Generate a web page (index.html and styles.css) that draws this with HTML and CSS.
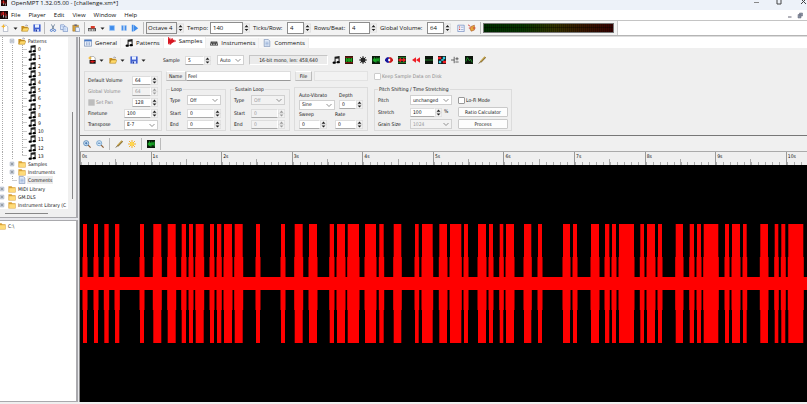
FILE: index.html
```
<!DOCTYPE html>
<html lang="en">
<head>
<meta charset="utf-8">
<title>OpenMPT</title>
<link rel="stylesheet" href="styles.css">
</head>
<body>
<svg class="defs" aria-hidden="true">
  <symbol id="logo" viewBox="0 0 10 10"><path fill="#16080a" d="M0 0h10v10H0z"/><path fill="#d22" d="M1 2h1v4H1zM3 1h2v4H3zM6 2h1v5H6zM8 4h1v2H8z"/><path fill="#ddd" d="M4 5h1v3H4zM7 6h1v3H7z"/></symbol>
  <symbol id="new" viewBox="0 0 10 10"><path fill="#fff" stroke="#8a93a8" stroke-width=".7" d="M3 1.5h3.500l2 2V9.500H3z"/><path fill="#f5b52c" d="M3 0l.9 2.100L6 3l-2.100.9L3 6l-.9-2.100L0 3l2.100-.9z"/></symbol>
  <symbol id="newsmp" viewBox="0 0 10 10"><path fill="#fff" stroke="#777" stroke-width=".7" d="M3 .5h4l2 2V9.500H3z"/><path fill="#f5b52c" d="M2.500 0l.7 1.700L5 2.500l-1.800.8L2.500 5l-.7-1.700L0 2.500l1.800-.8z"/><path fill="#111" d="M2 5h7.500v4.500H2z"/><path fill="#e01818" d="M3 6h2v2H3zM5 5.500h2v3H5zM7 6.500h2v1H7z"/></symbol>
  <symbol id="open" viewBox="0 0 10 10"><path fill="#c98f1f" d="M.5 2.500h3l1 1h4V9h-8z"/><path fill="#ffd968" stroke="#9a7420" stroke-width=".5" d="M2.800 5H10L8.300 9H1z"/><path fill="none" stroke="#557" stroke-width=".7" d="M5.500 1.800q2-1.500 3 .7"/></symbol>
  <symbol id="save" viewBox="0 0 10 10"><path fill="#3f5fd0" d="M.5.5h9v9h-9z"/><path fill="#e8f0ff" d="M2.500.5h5v4h-5z"/><path fill="#cfdcff" d="M3 6.500h4.500v3H3z"/><path fill="#25388c" d="M3.500 7h1.500v2.500H3.500z"/></symbol>
  <symbol id="cut" viewBox="0 0 10 10"><path fill="none" stroke="#5b7391" d="M3 .5l3 6M7 .5l-3 6"/><g fill="none" stroke="#3569c8"><circle cx="3" cy="8" r="1.300"/><circle cx="7" cy="8" r="1.300"/></g></symbol>
  <symbol id="copy" viewBox="0 0 10 10"><g fill="#e6f0ff" stroke="#6484bd" stroke-width=".8"><path d="M.8 1h4l1 1v5h-5z"/><path d="M4 3.500h4l1.500 1.500v4.500H4z"/></g><path stroke="#7fa4df" stroke-width=".6" d="M5 6h3M5 7.500h3M1.800 3H4"/></symbol>
  <symbol id="paste" viewBox="0 0 10 10"><path fill="#d9a33c" stroke="#8c6820" stroke-width=".6" d="M1 1.500h7V9H1z"/><path fill="#667" d="M3 .5h3V2.500H3z"/><path fill="#eaf2ff" stroke="#4d6fae" stroke-width=".6" d="M4.500 4H8l1.500 1.500v4h-5z"/></symbol>
  <symbol id="midi" viewBox="0 0 10 10"><path fill="#555" d="M0 5h10v4H0z"/><path fill="#eee" d="M1 6.500h1.300v2H1zM3 6.500h1.300v2H3zM5 6.500h1.300v2H5zM7 6.500h1.300v2H7z"/><path fill="#d83a28" d="M3.500 2.500h5v3h-5z"/></symbol>
  <symbol id="stop" viewBox="0 0 10 10"><path fill="#3e8ceb" stroke="#9cc5f7" d="M2 2h6v6H2z"/></symbol>
  <symbol id="pause" viewBox="0 0 10 10"><path fill="#3e8ceb" stroke="#9cc5f7" stroke-width=".5" d="M2 2h2.300v6H2zM5.700 2H8v6H5.700z"/></symbol>
  <symbol id="play" viewBox="0 0 10 10"><path fill="#3e8ceb" d="M1 1h2v8.500H1zM3.500 1l5.500 4.200-5.500 4.300z"/></symbol>
  <symbol id="folder" viewBox="0 0 10 10"><path fill="#d9a136" d="M.5 1.500h4l1 1.200h4V9.500h-9z"/><path fill="#ffdc7a" d="M1.500 4H9v4.700H1.500z"/></symbol>
  <symbol id="note" viewBox="0 0 10 10"><path fill="#1c1c1c" d="M3.200.8L9.500 0v8H8.200V3L4.500 3.500V9H3.200z"/><ellipse cx="2.700" cy="8.300" rx="2" ry="1.500"/><ellipse cx="7.700" cy="7.700" rx="2" ry="1.500"/></symbol>
  <symbol id="doc" viewBox="0 0 10 10"><path fill="#dfeaf9" stroke="#7189b0" stroke-width=".8" d="M1.500.5H6.500l2 2v7h-7z"/><path stroke="#7895c5" stroke-width=".7" d="M3 4h4M3 5.700h4M3 7.400h4"/></symbol>
  <symbol id="plus" viewBox="0 0 10 10"><path fill="#fff" stroke="#8795b0" d="M2 2h6v6H2z"/><path stroke="#345" d="M3 5h4M5 3v4"/></symbol>
  <symbol id="minus" viewBox="0 0 10 10"><path fill="#fff" stroke="#8795b0" d="M2 2h6v6H2z"/><path stroke="#345" d="M3 5h4"/></symbol>
  <symbol id="general" viewBox="0 0 10 10"><path fill="#f4f8ff" stroke="#6079a5" stroke-width=".8" d="M.5 1h9v8h-9z"/><path fill="#4779c7" d="M.5 1h9v2h-9z"/><path stroke="#6b88b8" stroke-width=".8" d="M3 4v4M5 4v4M7 4v4"/></symbol>
  <symbol id="wave" viewBox="0 0 10 10"><path fill="#d81722" d="M0 0h1v9H0zM1 2h1v6H1zM2 1h1v9H2zM3 3h1v6H3zM4 2h1v6H4zM5 1.500h1v6H5zM6 3.500h2v3H6zM8 4.500h2v1H8z"/></symbol>
  <symbol id="keys" viewBox="0 0 10 10"><path fill="#333" d="M1 3h8l1 5H0z"/><path fill="#ddd" d="M1.500 5.500h1v2h-1zM3.500 5.500h1v2h-1zM5.500 5.500h1v2h-1zM7.500 5.500h1v2h-1zM2 3.500h6v.7H2z"/></symbol>
  <symbol id="grid" viewBox="0 0 10 10"><path fill="#0b160b" d="M0 0h10v10H0z"/><path stroke="#c51414" d="M0 1.500h10M0 8.500h10"/><path fill="#20d520" d="M1 4.300h8v1.400H1zM1 2.700h2V4H1zM4 2.700h2V4H4zM7 2.700h2V4H7zM1 6h2v1.300H1zM4 6h2v1.300H4zM7 6h2v1.300H7z"/></symbol>
  <symbol id="burst" viewBox="0 0 10 10"><path stroke="#333" stroke-width="1.200" d="M5 0v10M0 5h10M1.500 1.500l7 7M8.500 1.500l-7 7"/><circle cx="5" cy="5" r="3.200" fill="#222"/></symbol>
  <symbol id="green" viewBox="0 0 10 10"><path fill="#0b160b" d="M0 0h10v10H0z"/><path fill="#19b82a" d="M1 3h1v4H1zM2.500 1.500h1v6h-1zM4 3h1v5H4zM5.500 2h1v6h-1zM7 2.500h1v4H7zM8.500 2h1v6h-1zM1 4.500h8v1H1z"/></symbol>
  <symbol id="xfade" viewBox="0 0 10 10"><path fill="#14149c" d="M5 1.500v7H2.500L0 6V4l2.500-2.500z"/><path fill="#c91616" d="M5 1.500h2.500L10 4v2L7.500 8.500H5z"/><path fill="#fff" d="M4 3.500h2.500v3H4z"/></symbol>
  <symbol id="redgreen" viewBox="0 0 10 10"><path fill="#112011" d="M0 0h10v10H0z"/><path stroke="#1d9a2c" d="M0 2h10M0 8h10"/><path fill="#ee2020" d="M0 5l3.500-3v2h3V2L10 5 6.500 8V6h-3v2z"/></symbol>
  <symbol id="rewind" viewBox="0 0 10 10"><path fill="#ee1e26" d="M0 5l5-3.500v7zM5 5l5-3.500v7z"/></symbol>
  <symbol id="flat" viewBox="0 0 10 10"><path fill="#0c140c" d="M0 0h10v10H0z"/><path stroke="#219b2d" d="M0 5h10"/></symbol>
  <symbol id="invert" viewBox="0 0 10 10"><path fill="#151515" d="M0 0h10v10H0z"/><path fill="#f01d24" d="M0 1h4v3H0zM6 6h4v3H6z"/><path fill="#39cfe6" d="M6 1h3v3H6zM1 6h3v3H1zM4 4h3v2H4z"/></symbol>
  <symbol id="dc" viewBox="0 0 10 10"><path stroke="#444" d="M0 5h4M4 1v8M5.500 3.500h4M7.500 1.500v4M5.500 7.500h4"/></symbol>
  <symbol id="amp" viewBox="0 0 10 10"><path fill="#0c140c" d="M0 0h10v10H0z"/><path fill="none" stroke="#1fa42d" d="M1 7l2-5 2.500 4L7 4l2 4"/></symbol>
  <symbol id="pencil" viewBox="0 0 10 10"><path stroke="#c2a045" stroke-width="2.200" d="M3 7.500L9 1"/><path stroke="#5e4922" stroke-width=".9" d="M3.500 8.300L10 1.500M1 9.500L3 7"/></symbol>
  <symbol id="zin" viewBox="0 0 10 10"><circle cx="4" cy="4" r="3.200" fill="#d9ecfb" stroke="#4a7cad"/><path stroke="#2b62a5" d="M2.300 4h3.400M4 2.300v3.400"/><path stroke="#8c5d35" stroke-width="1.500" d="M6.500 6.500l3 3"/></symbol>
  <symbol id="zout" viewBox="0 0 10 10"><circle cx="4" cy="4" r="3.200" fill="#d9ecfb" stroke="#6a9cc8"/><path stroke="#2b62a5" d="M2.300 4h3.400"/><path stroke="#8c5d35" stroke-width="1.500" d="M6.500 6.500l3 3"/></symbol>
  <symbol id="sun" viewBox="0 0 10 10"><path stroke="#f5ae26" stroke-width="1.200" d="M5 0v10M0 5h10M1.300 1.300l7.400 7.400M8.700 1.300L1.300 8.700"/><circle cx="5" cy="5" r="2.600" fill="#ffd84d"/></symbol>
  <symbol id="list" viewBox="0 0 10 10"><path fill="#f2f6ff" stroke="#5f7db8" stroke-width=".8" d="M1 1.500h8v8H1z"/><path fill="#d4473a" d="M2.500 3h1.500v1.500H2.500zM2.500 6h1.500v1.500H2.500z"/><path stroke="#5f7db8" stroke-width=".7" d="M5 4h3M5 7h3"/></symbol>
  <symbol id="bug" viewBox="0 0 10 10"><path fill="#e7a83a" stroke="#a44b20" stroke-width=".7" d="M4 3l4-1.500v6L4 9 2.500 6z"/><path stroke="#d02c20" d="M0 1l3 2M1 5h2M6 5h3.500"/></symbol>
  <symbol id="drop" viewBox="0 0 10 10"><path fill="#222" d="M1 3h8L5 7.500z"/></symbol>
  <symbol id="spin" viewBox="0 0 8 10"><path fill="#f1f1f1" stroke="#cfcfcf" stroke-width=".6" d="M.3.300h7.400v9.400H.3zM0 5h8"/><path fill="currentColor" d="M1.800 4L4 1.500 6.200 4zM1.800 6h4.400L4 8.500z"/></symbol>
</svg>

<header class="titlebar">
  <svg class="ic"><use href="#logo"/></svg><span class="title">OpenMPT 1.32.05.00 - [challenge.xm*]</span>
  <svg class="winbtns" viewBox="0 0 54 8"><g fill="none" stroke="#444"><path d="M1 2.500h5" stroke="#888"/><path d="M24 -2h4v6h-4z"/><path d="M48 -1l5 5M53 -1l-5 5"/></g></svg>
</header>

<nav class="menubar">
  <svg class="ic"><use href="#logo"/></svg>
  <a href="#">File</a><a href="#">Player</a><a href="#">Edit</a><a href="#">View</a><a href="#">Window</a><a href="#">Help</a>
  <svg class="mdibtns" viewBox="0 0 18 8"><path stroke="#667" d="M2 6h3.500"/><path fill="#8b96a8" stroke="#667" stroke-width=".5" d="M12 3.500h3V7h-3zM13.500 2h3v3h-3z"/></svg>
</nav>

<div class="toolbar">
  <div class="tools">
    <div class="icons">
      <svg class="ic"><use href="#new"/></svg><svg class="dd"><use href="#drop"/></svg>
      <svg class="ic"><use href="#open"/></svg><svg class="ic"><use href="#save"/></svg><i class="sep"></i>
      <svg class="ic"><use href="#cut"/></svg><svg class="ic"><use href="#copy"/></svg><svg class="ic"><use href="#paste"/></svg><i class="sep"></i>
      <svg class="ic"><use href="#midi"/></svg><svg class="dd"><use href="#drop"/></svg>
      <svg class="ic"><use href="#stop"/></svg><svg class="ic"><use href="#pause"/></svg><svg class="ic"><use href="#play"/></svg><i class="sep"></i>
    </div>
    <span class="num octave"><input aria-label="Octave" value="Octave 4"><svg><use href="#spin"/></svg></span>
    <label class="f-tempo" for="tempo">Tempo:</label><span class="num tempo"><input id="tempo" value="140"><svg><use href="#spin"/></svg></span>
    <label class="f-ticks" for="ticks">Ticks/Row:</label><span class="num short"><input id="ticks" value="4"><svg><use href="#spin"/></svg></span>
    <label class="f-rows" for="rows">Rows/Beat:</label><span class="num mid"><input id="rows" value="4"><svg><use href="#spin"/></svg></span>
    <label class="f-vol" for="gvol">Global Volume:</label><span class="num short"><input id="gvol" value="64"><svg><use href="#spin"/></svg></span>
    <svg class="ic gapl"><use href="#list"/></svg><svg class="ic"><use href="#bug"/></svg><i class="sep"></i>
    <div class="vu"></div>
  </div>
</div>

<div class="workspace">
  <aside class="side">
    <div class="treepane">
      <ul class="tree" id="tree">
        <li><i class="ln"></i><svg class="bx"><use href="#minus"/></svg><svg class="ti"><use href="#open"/></svg><span>Patterns</span></li>
        <li id="after"><i class="ln"></i><svg class="bx"><use href="#plus"/></svg><svg class="ti"><use href="#folder"/></svg><span>Samples</span></li>
        <li><i class="ln"></i><svg class="bx"><use href="#plus"/></svg><svg class="ti"><use href="#folder"/></svg><span>Instruments</span></li>
        <li><i class="ln"></i><i class="ln end"></i><svg class="ti"><use href="#doc"/></svg><span class="sel">Comments</span></li>
        <li><svg class="bx"><use href="#plus"/></svg><svg class="ti"><use href="#folder"/></svg><span>MIDI Library</span></li>
        <li><svg class="bx"><use href="#plus"/></svg><svg class="ti"><use href="#folder"/></svg><span>GM.DLS</span></li>
        <li><svg class="bx"><use href="#plus"/></svg><svg class="ti"><use href="#folder"/></svg><span>Instrument Library (C</span></li>
      </ul>
      <div class="vscroll"><i></i></div>
      <div class="hscroll"><i></i></div>
    </div>
    <div class="filepane"><svg class="ti"><use href="#folder"/></svg><span>C:\</span></div>
  </aside>

  <main class="main">
    <nav class="tabs">
      <a href="#"><svg class="ic"><use href="#general"/></svg>General</a>
      <a href="#"><svg class="ic"><use href="#note"/></svg>Patterns</a>
      <a href="#" class="on"><svg class="ic"><use href="#wave"/></svg>Samples</a>
      <a href="#"><svg class="ic"><use href="#keys"/></svg>Instruments</a>
      <a href="#"><svg class="ic"><use href="#doc"/></svg>Comments</a>
    </nav>

    <section class="panel">
      <div class="smpbar">
        <div class="files">
          <svg class="ic"><use href="#newsmp"/></svg><svg class="dd"><use href="#drop"/></svg>
          <svg class="ic"><use href="#open"/></svg><svg class="dd"><use href="#drop"/></svg>
          <svg class="ic"><use href="#save"/></svg><svg class="dd"><use href="#drop"/></svg>
        </div>
        <label class="f-smp" for="smp">Sample</label><span class="num s26"><input id="smp" value="5"><svg><use href="#spin"/></svg></span>
        <select class="auto" aria-label="Zoom"><option>Auto</option></select>
        <output class="info">16-bit mono, len: 458,640</output>
        <div class="fx">
          <svg class="ic"><use href="#note"/></svg><svg class="ic"><use href="#grid"/></svg><svg class="ic"><use href="#burst"/></svg><svg class="ic"><use href="#green"/></svg><svg class="ic"><use href="#xfade"/></svg><svg class="ic"><use href="#redgreen"/></svg><svg class="ic"><use href="#rewind"/></svg><svg class="ic"><use href="#flat"/></svg><svg class="ic"><use href="#invert"/></svg><svg class="ic"><use href="#dc"/></svg><svg class="ic"><use href="#amp"/></svg><svg class="ic"><use href="#pencil"/></svg>
        </div>
      </div>

      <div class="props">
        <div class="box levels">
          <div class="row"><label for="dv">Default Volume</label><span class="num s26"><input id="dv" value="64"><svg><use href="#spin"/></svg></span></div>
          <div class="row off"><label for="gv">Global Volume</label><span class="num s26"><input id="gv" value="64" disabled><svg><use href="#spin"/></svg></span></div>
          <div class="row"><label class="dim chk"><input type="checkbox" checked disabled>Set Pan</label><span class="num s26"><input aria-label="Pan" value="128"><svg><use href="#spin"/></svg></span></div>
          <div class="row"><label for="ft">Finetune</label><span class="num s34"><input id="ft" value="100"><svg><use href="#spin"/></svg></span></div>
          <div class="row"><label for="tr">Transpose</label><select id="tr" class="s34"><option>E-7</option></select></div>
        </div>

        <div class="middle">
          <div class="namerow">
            <label class="cap" for="nm">Name</label><input class="txt name" id="nm" value="Feel">
            <button class="cap file">File</button><input class="txt fname" aria-label="File name" disabled>
          </div>
          <div class="loops">
            <fieldset class="box loop"><legend>Loop</legend>
              <div class="row"><label for="lt">Type</label><select id="lt" class="s34"><option>Off</option></select></div>
              <div class="row"><label for="ls">Start</label><span class="num s34"><input id="ls" value="0"><svg><use href="#spin"/></svg></span></div>
              <div class="row"><label for="le">End</label><span class="num s34"><input id="le" value="0"><svg><use href="#spin"/></svg></span></div>
            </fieldset>
            <fieldset class="box loop"><legend>Sustain Loop</legend>
              <div class="row"><label for="st">Type</label><select id="st" class="s34" disabled><option>Off</option></select></div>
              <div class="row half"><label for="ss">Start</label><span class="num s34"><input id="ss" value="0" disabled><svg><use href="#spin"/></svg></span></div>
              <div class="row half"><label for="se">End</label><span class="num s34"><input id="se" value="0" disabled><svg><use href="#spin"/></svg></span></div>
            </fieldset>
            <div class="box vib">
              <label for="av">Auto-Vibrato</label><label for="dp">Depth</label>
              <select id="av"><option>Sine</option></select><span class="num"><input id="dp" value="0"><svg><use href="#spin"/></svg></span>
              <label for="sw">Sweep</label><label class="rate" for="rt">Rate</label>
              <span class="num s28"><input id="sw" value="0"><svg><use href="#spin"/></svg></span><span class="num rate"><input id="rt" value="0"><svg><use href="#spin"/></svg></span>
            </div>
          </div>
        </div>

        <div class="right">
          <label class="chk dim keep"><input type="checkbox" disabled>Keep Sample Data on Disk</label>
          <fieldset class="box stretch"><legend>Pitch Shifting / Time Stretching</legend>
            <label for="pi">Pitch</label><select id="pi"><option>unchanged</option></select><label class="chk"><input type="checkbox">Lo-Fi Mode</label>
            <label for="sr">Stretch</label><span class="pct"><span class="num"><input id="sr" value="100"><svg><use href="#spin"/></svg></span>%</span><button>Ratio Calculator</button>
            <label for="gs">Grain Size</label><select id="gs" disabled><option>1024</option></select><button>Process</button>
          </fieldset>
        </div>
      </div>
    </section>

    <div class="viewbar">
      <svg class="ic"><use href="#zin"/></svg><svg class="ic"><use href="#zout"/></svg><i class="sep"></i>
      <svg class="ic"><use href="#pencil"/></svg><svg class="ic"><use href="#sun"/></svg><i class="sep"></i>
      <svg class="ic"><use href="#green"/></svg><i class="sep"></i>
    </div>
    <div class="ruler"><span>0s</span><span>1s</span><span>2s</span><span>3s</span><span>4s</span><span>5s</span><span>6s</span><span>7s</span><span>8s</span><span>9s</span><span>10s</span></div>
    <svg class="waveform" viewBox="80 165 727 237" preserveAspectRatio="none"><path id="wavepath" fill="#f00"/></svg>
  </main>
</div>
<script src="script.js"></script>
</body>
</html>
```
FILE: styles.css
```
* { box-sizing: border-box; }
html, body { height: 100%; }
body {
  margin: 0; display: flex; flex-direction: column; overflow: hidden;
  background: #efefef; color: #111;
  font: 6px/8px "Open Sans", "Noto Sans", sans-serif;
}
.defs { position: absolute; width: 0; height: 0; }
a { color: inherit; text-decoration: none; }
input, select, button, output { font: inherit; color: inherit; margin: 0; padding: 0; border-radius: 0; }
svg { display: block; flex: none; }
.ic { width: 8px; height: 8px; }
.dd { width: 5px; height: 5px; }
.sep { width: 1px; height: 12px; background: #bbb; }

.titlebar { display: flex; align-items: flex-start; height: 10px; flex: none; background: #edf2f9; line-height: 6px; gap: 3px; }
.titlebar .ic { height: 6px; }
.winbtns { width: 54px; height: 8px; margin-left: auto; }

.menubar { display: flex; align-items: center; flex: none; height: 10px; background: #fff; gap: 8px; padding-right: 3px; }
.menubar .ic { margin-right: -5px; }
.mdibtns { width: 18px; height: 8px; margin-left: auto; }

.toolbar { flex: none; height: 16px; background: #fff; border-top: 1px solid #c4c4c4; border-bottom: 1px solid #b5b5b5; display: flex; }
.tools { display: flex; align-items: center; width: 618px; background: #f3f3f3; border-right: 1px solid #ccc; padding-left: 1px; }
.icons { display: flex; align-items: center; justify-content: space-between; width: 143px; margin-right: 2px; }
.num { display: flex; align-items: stretch; height: 9px; }
.num input { flex: 1; width: 0; min-width: 0; border: 1px solid #ccc; border-color: #ddd #fff #aaa #ddd; background: #fff; padding-left: 2px; }
.num svg { width: 7px; height: 100%; color: #222; }
.tools .num { height: 12px; }
.tools .num input { border: 1px solid #8d8d8d; }
.tools .octave input { background: #f0f0f0; padding-left: 1px; }
.octave { width: 38px; }
.tempo { width: 40px; }
.tools .short { width: 24px; }
.mid { width: 28px; }
.tools label { padding-left: 3px; white-space: nowrap; }
.f-tempo { width: 26px; }
.f-ticks { width: 37px; }
.f-rows { width: 38px; }
.f-vol { width: 50px; }
.gapl { margin: 0 3px 0 6px; }
.tools > .sep { margin: 0 2px 0 4px; }
.vu {
  flex: 1; height: 10px; margin-right: 3px; border: 1px solid #777;
  background: linear-gradient(#0000 3px, #0006 3px, #0006 4px, #0000 4px), repeating-linear-gradient(90deg, #0000 0 1px, #0005 1px 2px), linear-gradient(90deg, #003000, #073800 30%, #353500 55%, #3a1a00 75%, #380000);
}

.workspace { flex: 1; min-height: 0; display: grid; grid-template-columns: 79px 1fr; padding-bottom: 2px; border-top: 1px solid #ddd; }
.side, .panel, .ruler { font-family: "DejaVu Sans Condensed", "DejaVu Sans", sans-serif; font-size: 5px; }
.side { display: flex; flex-direction: column; gap: 2px; padding-right: 1px; min-height: 0; background: #e8e8ec; }
.treepane { display: grid; grid-template: 1fr 8px / 1fr 8px; height: 181px; border: solid #a9a9ad; border-width: 0 2px 1px 0; background: #fff; }
.tree { list-style: none; margin: 0 0 0 -3px; padding: 0; display: grid; grid-auto-rows: 1fr; min-width: 0; }
.tree li { display: flex; align-items: center; white-space: nowrap; min-width: 0; min-height: 0; line-height: 8px; }
.ln { width: 10px; height: 100%; flex: none; background: repeating-linear-gradient(#aaa 0 1px, #0000 1px 2px) 5px 0 / 1px 100% no-repeat; }
.ln.end { background: repeating-linear-gradient(#aaa 0 1px, #0000 1px 2px) 5px 0 / 1px 50% no-repeat, linear-gradient(#ccc, #ccc) 5px 50% / 5px 1px no-repeat; }
.ln.tee { background: repeating-linear-gradient(#aaa 0 1px, #0000 1px 2px) 5px 0 / 1px 100% no-repeat, linear-gradient(#ccc, #ccc) 5px 50% / 5px 1px no-repeat; }
.bx { width: 6px; height: 6px; margin: 0 2px; }
.ti { width: 8px; height: 8px; margin: 0 1px; }
.tree span { padding: 0 1px; }
.sel { background: #ececec; }
.vscroll { background: #f0f0f0; display: flex; justify-content: center; align-items: flex-end; padding-bottom: 10px; }
.vscroll i { width: 1px; height: 54%; background: #888; }
.hscroll { grid-column: 1 / 3; background: #f0f0f0; display: flex; align-items: center; padding-left: 5px; }
.hscroll i { width: 60%; height: 1px; background: #888; }
.filepane { flex: 1; background: #fff; border: solid #a9a9ad; border-width: 1px 2px 1px 0; display: flex; align-items: flex-start; padding-top: 1px; }
.filepane .ti { margin: 0 2px 0 -2px; }

.main { display: flex; flex-direction: column; min-width: 0; min-height: 0; border-left: 1px solid #8a8a8a; }
.tabs { display: flex; align-items: flex-end; height: 11px; flex: none; background: #fff; }
.tabs a { display: flex; align-items: center; gap: 3px; height: 10px; padding: 0 3px 0 4px; background: #f6f6f6; border-right: 1px solid #eee; }
.tabs a.on { height: 11px; background: #fff; align-items: flex-start; }

.panel { flex: none; height: 88px; padding: 6px 4px 0; line-height: 7px; border-bottom: 1px solid #777; display: flex; flex-direction: column; }
.smpbar { display: flex; align-items: center; height: 12px; }
.files { display: flex; align-items: center; justify-content: space-between; width: 61px; margin: 0 14px 0 4px; }
.files .dd { margin-right: 3px; }
.f-smp { width: 22px; }
.s26 { width: 26px; } .s28 { width: 28px; } .s34 { width: 34px; }
select {
  appearance: none; height: 10px; border: 1px solid #d0d0d0; padding-left: 2px;
  background: #fff url("data:image/svg+xml,%3Csvg xmlns='http://www.w3.org/2000/svg' viewBox='0 0 6 6'%3E%3Cpath d='M.5 2l2.500 2.500L5.500 2' fill='none' stroke='%23777' stroke-width='.8'/%3E%3C/svg%3E") right 2px center / 6px 6px no-repeat;
}
select:disabled, input:disabled { color: #999; background-color: #f2f2f2; opacity: 1; }
.off, .dim { color: #8a8a8a; }
.off .num svg, .half .num svg { color: #999; }
.auto { width: 27px; margin: 0 5px 0 6px; }
.info { width: 79px; height: 10px; text-align: center; border: 1px solid; border-color: #c5c5c5 #fff #fff #c5c5c5; background: #ebebeb; line-height: 8px; white-space: nowrap; }
.fx { display: flex; justify-content: space-between; width: 154px; margin-left: 4px; }

.props { display: flex; align-items: stretch; gap: 4px; flex: 1; padding: 5px 0 4px; }
.box { border: 1px solid #dcdcdc; margin: 0; padding: 0; min-width: 0; }
.row { display: flex; align-items: center; justify-content: space-between; height: 11px; white-space: nowrap; }
.levels { width: 78px; padding: 3px 3px 0; }
.chk { display: flex; align-items: center; gap: 1px; white-space: nowrap; }
.chk input { appearance: none; width: 7px; height: 7px; border: 1px solid #999; border-radius: 1px; background: #fff; }
.dim.chk input { border-color: #ccc; }
.chk input:checked { background: #bdbdbd; }
.middle { display: flex; flex-direction: column; gap: 6px; width: 202px; }
.namerow { display: flex; height: 10px; line-height: 8px; }
.cap { width: 20px; border: 1px solid; border-color: #fff #bbb #bbb #ddd; background: #ececec; padding-left: 2px; }
.txt { border: 1px solid #ddd; border-bottom-color: #999; background: #fff; padding-left: 1px; min-width: 0; }
.name { flex: 1; }
.cap.file { width: 17px; margin: 0 2px 0 4px; padding: 0; text-align: center; }
.fname { width: 54px; border-color: #e2e2e2; }
.loops { display: flex; gap: 4px; flex: 1; }
.loop { width: 60px; padding: 2px 4px 0 3px; }
legend { padding: 0 1px; margin-left: 0; line-height: 5px; }
.loop .row:first-of-type { height: 12px; margin-bottom: 2px; }
.vib { flex: 1; display: grid; grid-template: 8px 11px 9px 10px / 36px 24px; column-gap: 4px; align-items: center; padding: 3px 4px 0; white-space: nowrap; }
.rate { margin-left: -4px; }
.right { display: flex; flex-direction: column; gap: 6px; margin-left: 2px; }
.keep { height: 10px; }
.stretch { flex: 1; width: 138px; display: grid; grid-template-columns: 32px 42px 50px; grid-auto-rows: 12px; align-items: center; padding: 2px 3px 0; white-space: nowrap; }
.stretch > .chk, .stretch > button { margin-left: 6px; width: 50px; }
.stretch button { height: 10px; border: 1px solid #c9c9c9; background: #fdfdfd; line-height: 8px; border-radius: 1px; }
.pct { display: flex; gap: 2px; }
.pct .num { width: 32px; }

.viewbar { flex: none; height: 15px; display: flex; align-items: center; gap: 5px; padding-left: 3px; background: #f0f0f0; }
.ruler { flex: none; display: flex; height: 14px; overflow: hidden; border-top: 1px solid #aaa; line-height: 8px; }
.ruler span {
  flex: 0 0 9.710%; border-left: 1px solid #999; padding-left: 1px;
  background: repeating-linear-gradient(90deg, #aaa 0 1px, #0000 1px 10%) 0 100% / 100% 3px no-repeat, linear-gradient(#aaa, #aaa) 50% 100% / 1px 6px no-repeat;
}
.waveform { flex: 1; min-height: 0; width: 100%; background: #000; }
```
FILE: script.js
```
// Pattern rows of the song tree
const after = document.getElementById('after');
for (let i = 0; i < 14; i++) {
  after.insertAdjacentHTML('beforebegin',
    `<li><i class="ln"></i><i class="ln"></i><i class="ln ${i === 13 ? 'end' : 'tee'}"></i><svg class="ti"><use href="#note"/></svg><span>${i}</span></li>`);
}

// Loud sections of the sample: start and end of each burst
const bursts = [[83,87],[94,98],[104.3,108.7],[115,119.3],[140,144],[153.3,161.3],[167.7,175.7],[181.7,186],[189,193],[195.7,203.7],[210,214],[217,221.3],[224,232],[234.7,242.7],[256,260],[281,285],[294.7,302.7],[309,317],
[329.7,334],[337,345],[347.7,359],[365,376],[379.3,383.7],[393.7,401.3],[415,418.7],[422,432.7],[439.3,447],[450,461.3],[464,468],[478,486],[489,493],[499.7,503.3],[506,514],[524,531.3],[538,542],
[563,570],[573,577],[591,599],[605,609.3],[612,616],[619,634],[640.3,644],[647,655],[658,662],[675.7,683],[689.7,694],[697,701],[703.7,718.3],[725,729],[732,740],[743,746.7],[760.3,768],[774.7,778.3],[781.3,785.3],[788.3,803.3]];
let d = 'M80 277H807V290H80Z';
for (const [a, b] of bursts) {
  d += `M${a} 224H${b}V257H${b + 0.5}V310H${b}V343H${a}V310H${a - 0.5}V257H${a}Z`;
}
document.getElementById('wavepath').setAttribute('d', d);
```
